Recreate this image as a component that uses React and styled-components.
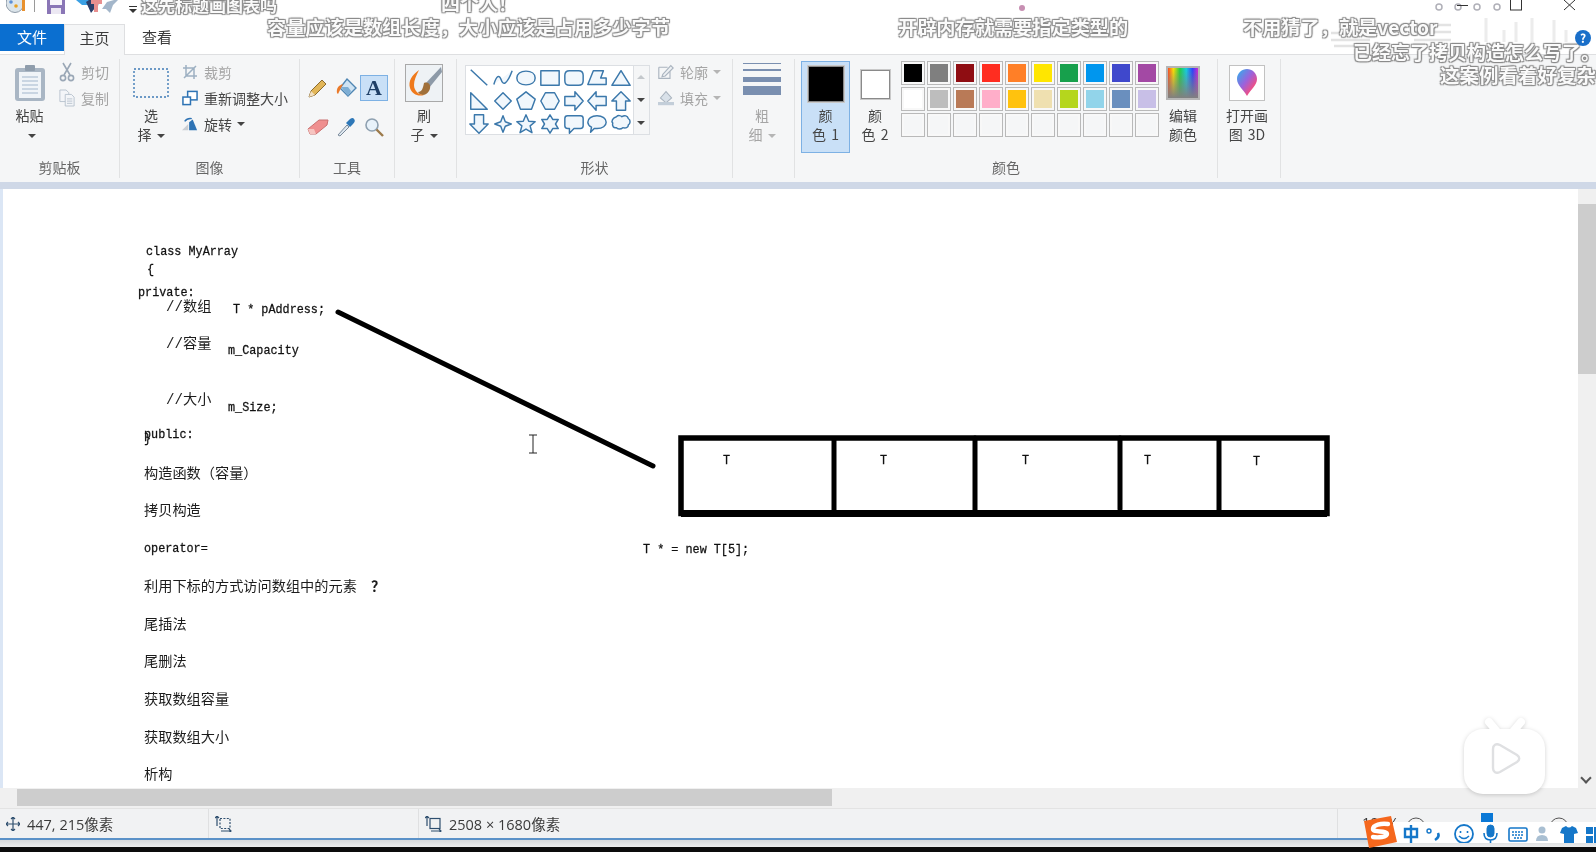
import React from "react";
import styled, { createGlobalStyle } from "styled-components";

const GlobalStyle = createGlobalStyle`
  html, body { margin: 0; padding: 0; background: #fff; }
  body { font-family: "Noto Sans CJK SC", "Noto Sans", sans-serif; overflow: hidden; }
`;

const row1 = ["#000000", "#7f7f7f", "#8f0d12", "#ff2d20", "#ff7f27", "#ffe600", "#17a04c", "#0096ee", "#3f48cc", "#a349a4"];
const row2 = ["#ffffff", "#bdbdbd", "#b97a57", "#ffaec9", "#ffc20e", "#efe0b0", "#b5d61d", "#92d4ea", "#6a8fbe", "#c8bfe7"];
const row3 = Array(10).fill("transparent");

const shapes = [
  "M3 3L21 20",
  "M2 19C5 9 8 8 10 14S16 20 22 4",
  "M12 4.5C18 4.5 22 7.5 22 12S18 19.5 12 19.5S2 16.5 2 12S6 4.5 12 4.5Z",
  "M2 4H22V20H2Z",
  "M7 4H17Q22 4 22 9V15Q22 20 17 20H7Q2 20 2 15V9Q2 4 7 4Z",
  "M2 19L8 4H19L16 12H22V19Z",
  "M12 4L22 20H2Z",
  "M3 3L21 21H3Z",
  "M12 3L21 12L12 21L3 12Z",
  "M12 2L22 10L18 21H6L2 10Z",
  "M7 3H17L22 12L17 21H7L2 12Z",
  "M2 7H13V2L22 12L13 22V17H2Z",
  "M22 7H11V2L2 12L11 22V17H22Z",
  "M12 2L22 12H17V22H7V12H2Z",
  "M12 22L22 12H17V2H7V12H2Z",
  "M12 3L14.5 9.5L21 12L14.5 14.5L12 21L9.5 14.5L3 12L9.5 9.5Z",
  "M12 2L15 9L22 9.5L16.5 14L18.5 21.5L12 17.5L5.5 21.5L7.5 14L2 9.5L9 9Z",
  "M12 2L15 7H21L18 12L21 17H15L12 22L9 17H3L6 12L3 7H9Z",
  "M5 3H19Q22 3 22 6V14Q22 17 19 17H12L7 22V17H5Q2 17 2 14V6Q2 3 5 3Z",
  "M12 3C18 3 22 6 22 10S18 17 12 17Q10 17 9 17L5 21L6 15.5C3.5 14 2 12 2 10C2 6 6 3 12 3Z",
  "M7 4C9 2 12 3 13 4C16 2 19 3 20 6C23 8 22 12 20 13C20 16 17 17 14 16C12 18 8 18 7 16C4 17 2 14 3 11C1 9 3 5 7 4Z",
];

const leftNotes = [
  { y: 474, text: "构造函数（容量）" },
  { y: 511, text: "拷贝构造" },
  { y: 587, text: "利用下标的方式访问数组中的元素" },
  { y: 625, text: "尾插法" },
  { y: 662, text: "尾删法" },
  { y: 700, text: "获取数组容量" },
  { y: 738, text: "获取数组大小" },
  { y: 775, text: "析构" },
];

const code = [
  { x: 146, y: 252, text: "class MyArray" },
  { x: 147, y: 270, text: "{" },
  { x: 138, y: 293, text: "private:" },
  { x: 233, y: 310, text: "T * pAddress;" },
  { x: 228, y: 351, text: "m_Capacity" },
  { x: 228, y: 408, text: "m_Size;" },
  { x: 144, y: 435, text: "public:" },
  { x: 144, y: 439, text: "}" },
  { x: 144, y: 549, text: "operator=" },
  { x: 643, y: 550, text: "T * = new T[5];" },
  { x: 723, y: 461, text: "T" },
  { x: 880, y: 461, text: "T" },
  { x: 1022, y: 461, text: "T" },
  { x: 1144, y: 461, text: "T" },
  { x: 1253, y: 462, text: "T" },
];

const comments = [
  { y: 309, text: "//数组" },
  { y: 346, text: "//容量" },
  { y: 402, text: "//大小" },
];

const danmaku = [
  { x: 141, y: 5, size: 17, text: "这先标题画图表吗" },
  { x: 441, y: 3, size: 19, text: "四个人！" },
  { x: 267, y: 27, size: 19.2, text: "容量应该是数组长度，大小应该是占用多少字节" },
  { x: 898, y: 27, size: 19.2, text: "开辟内存就需要指定类型的" },
  { x: 1243, y: 27, size: 19.2, text: "不用猜了，就是vector" },
  { x: 1353, y: 52, size: 19, text: "已经忘了拷贝构造怎么写了。" },
  { x: 1440, y: 75, size: 19.5, text: "这案例看着好复杂" },
];

function PasteIcon() {
  return (
    <svg width="32" height="38" viewBox="0 0 32 38">
      <rect x="1" y="4" width="30" height="33" rx="3" fill="#a9b6c4" />
      <rect x="5" y="8" width="22" height="26" fill="#f0f4f8" />
      <path d="M8 13H24M8 17H24M8 21H24M8 25H24M8 29H24" stroke="#bccada" strokeWidth="1.5" />
      <rect x="11" y="1" width="10" height="6" rx="1" fill="#8f9dac" />
    </svg>
  );
}

function CutIcon() {
  return (
    <svg width="16" height="20" viewBox="0 0 16 20" fill="none" stroke="#9aa7b6" strokeWidth="1.6">
      <path d="M4 1L11 13M12 1L5 13" />
      <circle cx="4" cy="16" r="2.6" />
      <circle cx="12" cy="16" r="2.6" />
    </svg>
  );
}

function CopyIcon() {
  return (
    <svg width="18" height="20" viewBox="0 0 18 20" fill="#f3f5f8" stroke="#b5c0cc">
      <path d="M1 1H8L11 4V14H1Z" />
      <path d="M7 6H14L17 9V19H7Z" />
      <path d="M9 11H15M9 13.5H15M9 16H15" />
    </svg>
  );
}

function SelectIcon() {
  return (
    <svg width="36" height="30" viewBox="0 0 36 30">
      <rect x="1" y="1" width="34" height="28" fill="none" stroke="#3f7bb6" strokeWidth="1.4" strokeDasharray="2 2" />
    </svg>
  );
}

function CropIcon() {
  return (
    <svg width="16" height="16" viewBox="0 0 16 16" fill="none" stroke="#9db0c2" strokeWidth="1.5">
      <path d="M4 1V12H15M1 4H12V15M2 14L14 2" />
    </svg>
  );
}

function ResizeIcon() {
  return (
    <svg width="17" height="16" viewBox="0 0 17 16" fill="#fff" stroke="#2e73b4" strokeWidth="1.6">
      <rect x="6" y="1" width="10" height="9" />
      <rect x="1" y="7" width="8" height="8" />
    </svg>
  );
}

function RotateIcon() {
  return (
    <svg width="18" height="16" viewBox="0 0 18 16">
      <path d="M0 15L7 15V8Z" fill="#c9ced4" />
      <path d="M8 15H17L12 3L8 6Z" fill="#2e73b4" />
      <path d="M3 5Q6 1 11 2" fill="none" stroke="#2e73b4" strokeWidth="1.6" />
    </svg>
  );
}

function PencilIcon() {
  return (
    <svg width="20" height="20" viewBox="0 0 20 20">
      <path d="M1 19L3 13L14 2L18 6L7 17Z" fill="#e2b658" stroke="#8a6b2f" />
      <path d="M1 19L3 13L7 17Z" fill="#f2dfc0" />
    </svg>
  );
}

function FillIcon() {
  return (
    <svg width="22" height="22" viewBox="0 0 22 22">
      <path d="M12 2L21 11L13 19L5 11Z" fill="#cfe3f3" stroke="#4f86b3" strokeWidth="1.4" />
      <path d="M6 10L13 10L16 14L13 19Z" fill="#7eaed4" />
      <path d="M2 16C1 11 4 8 8 7L6 11L3 17Z" fill="#ea7a2a" />
    </svg>
  );
}

function EraserIcon() {
  return (
    <svg width="22" height="18" viewBox="0 0 22 18">
      <path d="M1 11L12 2H21L20 7L9 16H3Z" fill="#ef8f8f" stroke="#c97070" />
      <path d="M1 11L3 16H9L7 11Z" fill="#f6c4c0" />
    </svg>
  );
}

function PickerIcon() {
  return (
    <svg width="20" height="20" viewBox="0 0 20 20">
      <path d="M2 18L11 8L13 10L4 19Z" fill="#dfe8f0" stroke="#7a8a9a" />
      <path d="M10 6L14 2Q17 0 18 2Q20 4 17 7L14 10Z" fill="#2e78b8" />
    </svg>
  );
}

function ZoomIcon() {
  return (
    <svg width="20" height="20" viewBox="0 0 20 20" fill="none">
      <circle cx="8" cy="8" r="6" fill="#e8f2fa" stroke="#8ea0b0" strokeWidth="1.6" />
      <path d="M12.5 12.5L19 19" stroke="#9c7a4a" strokeWidth="2.4" />
    </svg>
  );
}

function BrushIcon() {
  return (
    <svg width="38" height="38" viewBox="0 0 38 38">
      <rect x="0.5" y="0.5" width="37" height="37" fill="#eef2f5" stroke="#a9a9a9" />
      <path d="M36 3L20 20L24 24L37 8Z" fill="#8d9aa8" />
      <path d="M19 19C24 17 27 22 24 27C21 32 15 32 13 28C17 28 18 24 19 19Z" fill="#a0703a" />
      <path d="M14 6C7 11 3 17 5 24C7 30 13 33 19 31C14 31 9 27 9 21C9 16 11 12 14 6Z" fill="#ef7a1c" />
    </svg>
  );
}

function OutlineIcon() {
  return (
    <svg width="20" height="18" viewBox="0 0 20 18" fill="none" stroke="#aab4bf" strokeWidth="1.4">
      <path d="M1 3H12M1 3V17H15V8" />
      <path d="M6 12L16 1L19 4L9 14L5 15Z" fill="#eef1f4" />
    </svg>
  );
}

function FillShapeIcon() {
  return (
    <svg width="20" height="18" viewBox="0 0 20 18">
      <path d="M3 9L10 1L17 9L10 15Z" fill="#d9e1e9" stroke="#aab4bf" strokeWidth="1.3" />
      <rect x="0" y="14" width="20" height="4" fill="#c3ced9" />
    </svg>
  );
}

function LinesIcon() {
  return (
    <svg width="40" height="34" viewBox="0 0 40 34" fill="#7a8fb0">
      <rect x="1" y="0" width="38" height="1" />
      <rect x="1" y="6" width="38" height="2" />
      <rect x="1" y="14" width="38" height="5" />
      <rect x="1" y="23" width="38" height="9" />
    </svg>
  );
}

function RainbowIcon() {
  return (
    <svg width="34" height="34" viewBox="0 0 34 34">
      <defs>
        <linearGradient id="spectrum" x1="0" x2="1" y1="0" y2="0">
          <stop offset="0" stopColor="#ff2a2a" />
          <stop offset="0.2" stopColor="#ffe000" />
          <stop offset="0.4" stopColor="#20d040" />
          <stop offset="0.6" stopColor="#10d0e0" />
          <stop offset="0.8" stopColor="#2a40ff" />
          <stop offset="1" stopColor="#f020d0" />
        </linearGradient>
        <linearGradient id="fade" x1="0" x2="0" y1="0" y2="1">
          <stop offset="0" stopColor="#808080" stopOpacity="0" />
          <stop offset="1" stopColor="#808080" stopOpacity="1" />
        </linearGradient>
      </defs>
      <rect x="1" y="1" width="32" height="32" fill="url(#spectrum)" stroke="#b5b5b5" strokeWidth="2" />
      <rect x="2" y="2" width="30" height="30" fill="url(#fade)" />
    </svg>
  );
}

function Paint3DIcon() {
  return (
    <svg width="36" height="36" viewBox="0 0 36 36">
      <defs>
        <linearGradient id="drop" x1="0" x2="1" y1="0" y2="1">
          <stop offset="0" stopColor="#28b4ee" />
          <stop offset="0.45" stopColor="#9b62dc" />
          <stop offset="0.75" stopColor="#ef4f86" />
          <stop offset="1" stopColor="#ffb21e" />
        </linearGradient>
      </defs>
      <rect x="0.5" y="0.5" width="35" height="35" fill="#fff" stroke="#c2c2c2" />
      <path d="M18 31C14 24 8 20 8 14C8 8 13 4 18 4C23 4 28 8 28 14C28 20 22 24 18 31Z" fill="url(#drop)" />
    </svg>
  );
}

function PaletteSmall() {
  return (
    <svg width="20" height="14" viewBox="0 0 20 14">
      <ellipse cx="9" cy="3" rx="9" ry="9.500" fill="#dbe4ea" stroke="#8e9aa7" />
      <circle cx="5" cy="2" r="1.8" fill="#5b8fd6" />
      <circle cx="10" cy="6" r="1.8" fill="#e8a020" />
      <path d="M16 0H19V11H16Z" fill="#e8912f" />
    </svg>
  );
}

function SaveIcon() {
  return (
    <svg width="18" height="14" viewBox="0 0 18 14">
      <rect x="0" y="-4" width="18" height="18" fill="#8a76b6" />
      <rect x="4" y="8" width="10" height="6" fill="#ece8f3" />
      <rect x="3" y="-4" width="12" height="9" fill="#f7f5fa" />
    </svg>
  );
}

function UndoIcon() {
  return (
    <svg width="42" height="14" viewBox="0 0 42 14">
      <path d="M0 0H13V5H6Z" fill="#3aa0e4" />
      <path d="M10 2L15 13L19 8L21 12L23 0H13Z" fill="#2c3f6b" />
      <path d="M15 0H26V4H22V12H18V4H15Z" fill="#e88f8f" />
      <path d="M26 9L31 2L38 0H42L37 5L34 13L30 9Z" fill="#a3b6ca" />
    </svg>
  );
}

function WindowIcons() {
  return (
    <svg width="166" height="24" viewBox="0 0 166 24" fill="none">
      <g stroke="#b0b0b8" strokeWidth="1.5">
        <circle cx="9" cy="7" r="3" />
        <circle cx="28" cy="7" r="3" />
        <circle cx="47" cy="7" r="3" />
        <circle cx="67" cy="7" r="3" />
      </g>
      <path d="M27 5.5H38" stroke="#333" />
      <rect x="80.5" y="-2" width="11" height="12" stroke="#333" />
      <path d="M134 0L145 10M145 0L134 10" stroke="#333" />
    </svg>
  );
}

function GhostMarks() {
  return (
    <svg width="270" height="32" viewBox="0 0 270 32" fill="none" stroke="#e3e3e3" strokeWidth="2.5">
      <path d="M5 17H44M5 24H44M8 30H44M88 9H125M88 16H125M88 24H125" />
      <path d="M160 2V26M178 14V26M190 6V26M206 2V26M228 4V26M240 14V26" stroke="#ececec" strokeWidth="3" />
    </svg>
  );
}

function IBeam() {
  return (
    <svg width="10" height="20" viewBox="0 0 10 20" fill="none" stroke="#222">
      <path d="M1 1H9M5 1V19M1 19H9" />
    </svg>
  );
}

function Diagram() {
  return (
    <svg width="1578" height="599" viewBox="0 189 1578 599" fill="none" stroke="#000">
      <path d="M338 312L653 466" strokeWidth="5" strokeLinecap="round" />
      <path d="M681 438H1327V513.5H681Z" strokeWidth="5.5" />
      <path d="M681 513.5H1327" strokeWidth="7" />
      <path d="M834 438V513M1219 438V513" strokeWidth="5" />
      <path d="M975 438V510M1120 438V509" strokeWidth="5" strokeLinecap="round" />
    </svg>
  );
}

function MoveIcon() {
  return (
    <svg width="14" height="14" viewBox="0 0 14 14" fill="none" stroke="#2f4f6f" strokeWidth="1.2">
      <path d="M7 0V14M0 7H14M5 2L7 0L9 2M5 12L7 14L9 12M2 5L0 7L2 9M12 5L14 7L12 9" />
    </svg>
  );
}

function SelectionSize() {
  return (
    <svg width="17" height="16" viewBox="0 0 17 16" fill="none" stroke="#2f4f6f" strokeWidth="1.2">
      <rect x="5" y="2.5" width="10" height="10" strokeDasharray="2 1.4" />
      <path d="M2 0V10M0 2L2 0L4 2M6 15H16M14 13L16 15L14 17" />
    </svg>
  );
}

function CanvasSize() {
  return (
    <svg width="17" height="16" viewBox="0 0 17 16" fill="none" stroke="#2f4f6f" strokeWidth="1.2">
      <rect x="5" y="2.5" width="10" height="10" />
      <path d="M2 0V10M0 2L2 0L4 2M6 15H16M14 13L16 15L14 17" />
    </svg>
  );
}

function ZoomControls() {
  return (
    <svg width="190" height="20" viewBox="0 0 190 20" fill="none" stroke="#555">
      <path d="M0 13H180" stroke="#bbb" strokeWidth="2" />
      <circle cx="9" cy="14" r="9" fill="#f2f2f2" />
      <rect x="74" y="0" width="12" height="16" fill="#0a78d6" stroke="none" />
      <circle cx="152" cy="14" r="9" fill="#f2f2f2" />
    </svg>
  );
}

function SogouLogo() {
  return (
    <svg width="34" height="32" viewBox="0 0 34 32">
      <path d="M1 5L28 0L34 26L6 32Z" fill="#f5671d" />
      <path d="M25 8C18 7 10 9 10 13C10 17 24 14 24 18C24 21 15 22 10 21" fill="none" stroke="#fff" strokeWidth="4.4" strokeLinecap="round" />
    </svg>
  );
}

function ImeIcons() {
  return (
    <svg width="194" height="21" viewBox="0 0 194 21" fill="none" stroke="#1577c9">
      <path d="M3 5H15V13H3ZM9 1V20" strokeWidth="2.4" />
      <circle cx="27" cy="7" r="2" strokeWidth="1.4" />
      <path d="M36 9Q38 13 33 16" strokeWidth="2.6" />
      <circle cx="62" cy="10" r="9" strokeWidth="1.8" />
      <path d="M57 12Q62 17 67 12M58.5 7V9M65.5 7V9" strokeWidth="1.6" />
      <rect x="85" y="1" width="7" height="12" rx="3.5" fill="#1577c9" />
      <path d="M82 9Q82 16 88.500 16Q95 16 95 9M88.500 16V20M84 20H93" strokeWidth="1.6" />
      <rect x="107" y="4" width="18" height="13" rx="1.500" strokeWidth="1.6" />
      <path d="M110 8H122M110 11H122M112 14H120" strokeWidth="1.4" strokeDasharray="2 1" />
      <circle cx="140" cy="6" r="3.500" fill="#a9bfd2" stroke="none" />
      <path d="M134 17Q134 11 140 11Q146 11 146 17Z" fill="#a9bfd2" stroke="none" />
      <path d="M160 4L164 2Q167 5 170 2L174 4L176 9L172 10V19H162V10L158 9Z" fill="#1577c9" stroke="none" />
      <path d="M184 3H191V10H184ZM184 12H191V19H184ZM192 3H194V19H192Z" fill="#1577c9" stroke="none" />
    </svg>
  );
}

function BiliLogo() {
  return (
    <svg width="84" height="80" viewBox="0 0 84 80">
      <path d="M26 6L36 18M58 6L48 18" stroke="#fff" strokeWidth="8" strokeLinecap="round" />
      <rect x="1" y="13" width="81" height="65" rx="19" fill="#fff" />
      <path d="M30 33C30 29 33 27 37 29L54 39C57 41 57 44 54 46L37 56C33 58 30 56 30 52Z" fill="#fff" stroke="#dfe0e2" strokeWidth="2.4" />
    </svg>
  );
}

export default function App() {
  return (
    <>
      <GlobalStyle />
      <Root>
        <TitleBar>
          <TitleSlot $ml={6}><PaletteSmall /></TitleSlot>
          <TitleSep />
          <TitleSlot $ml={12}><SaveIcon /></TitleSlot>
          <TitleSlot $ml={11}><UndoIcon /></TitleSlot>
          <TitleSlot $ml={11}><QuickCaret /></TitleSlot>
          <WindowSlot><WindowIcons /></WindowSlot>
        </TitleBar>

        <TabRow>
          <FileTab>文件</FileTab>
          <HomeTab>主页</HomeTab>
          <ViewTab>查看</ViewTab>
        </TabRow>

        <Ribbon>
          <Group $w={120}>
            <GroupBody>
              <LargeButton $w={59}>
                <IconSlot><PasteIcon /></IconSlot>
                <LargeLabel>粘贴</LargeLabel>
                <LargeLabel><Caret /></LargeLabel>
              </LargeButton>
              <SmallColumn>
                <SmallItem $muted><SmallIcon><CutIcon /></SmallIcon>剪切</SmallItem>
                <SmallItem $muted><SmallIcon><CopyIcon /></SmallIcon>复制</SmallItem>
              </SmallColumn>
            </GroupBody>
            <GroupLabel>剪贴板</GroupLabel>
          </Group>

          <Group $w={180}>
            <GroupBody>
              <LargeButton $w={62}>
                <IconSlot><SelectIcon /></IconSlot>
                <LargeLabel>选</LargeLabel>
                <LargeLabel>择<Caret /></LargeLabel>
              </LargeButton>
              <SmallColumn>
                <SmallItem $muted><SmallIcon><CropIcon /></SmallIcon>裁剪</SmallItem>
                <SmallItem><SmallIcon><ResizeIcon /></SmallIcon>重新调整大小</SmallItem>
                <SmallItem><SmallIcon><RotateIcon /></SmallIcon>旋转<Caret /></SmallItem>
              </SmallColumn>
            </GroupBody>
            <GroupLabel>图像</GroupLabel>
          </Group>

          <Group $w={95}>
            <GroupBody>
              <ToolGrid>
                <ToolCell><PencilIcon /></ToolCell>
                <ToolCell><FillIcon /></ToolCell>
                <ToolCell $active><TextTool>A</TextTool></ToolCell>
                <ToolCell><EraserIcon /></ToolCell>
                <ToolCell><PickerIcon /></ToolCell>
                <ToolCell><ZoomIcon /></ToolCell>
              </ToolGrid>
            </GroupBody>
            <GroupLabel>工具</GroupLabel>
          </Group>

          <Group $w={62}>
            <GroupBody>
              <LargeButton $w={58}>
                <IconSlot><BrushIcon /></IconSlot>
                <LargeLabel>刷</LargeLabel>
                <LargeLabel>子<Caret /></LargeLabel>
              </LargeButton>
            </GroupBody>
            <GroupLabel />
          </Group>

          <Group $w={276}>
            <GroupBody>
              <Gallery>
                <ShapeGrid>
                  {shapes.map((d) => (
                    <svg key={d} width="22" height="22" viewBox="0 0 24 24" fill="#f1f7fc" stroke="#3b78ab" strokeWidth="1.6" strokeLinejoin="round">
                      <path d={d} />
                    </svg>
                  ))}
                </ShapeGrid>
                <GalleryScroll>
                  <ScrollArrow $dir="up" />
                  <ScrollArrow $dir="down" />
                  <ScrollArrow $dir="more" />
                </GalleryScroll>
              </Gallery>
              <ShapeOptions>
                <SmallItem $muted><SmallIcon><OutlineIcon /></SmallIcon>轮廓<Caret $muted /></SmallItem>
                <SmallItem $muted><SmallIcon><FillShapeIcon /></SmallIcon>填充<Caret $muted /></SmallItem>
              </ShapeOptions>
            </GroupBody>
            <GroupLabel>形状</GroupLabel>
          </Group>

          <Group $w={62}>
            <GroupBody>
              <LargeButton $w={58} $muted>
                <IconSlot $h={42} $pad={6}><LinesIcon /></IconSlot>
                <LargeLabel>粗</LargeLabel>
                <LargeLabel>细<Caret $muted /></LargeLabel>
              </LargeButton>
            </GroupBody>
            <GroupLabel />
          </Group>

          <Group $w={423}>
            <GroupBody>
              <ColorPick $selected>
                <IconSlot $h={46}><ColorSwatch $size={36} $fill="#000" /></IconSlot>
                <LargeLabel>颜</LargeLabel>
                <LargeLabel $wide>色 1</LargeLabel>
              </ColorPick>
              <ColorPick>
                <IconSlot $h={46}><ColorSwatch $size={29} $fill="#fff" /></IconSlot>
                <LargeLabel>颜</LargeLabel>
                <LargeLabel $wide>色 2</LargeLabel>
              </ColorPick>
              <Palette>
                {[...row1, ...row2, ...row3].map((c, i) => (
                  <PaletteCell key={i} $fill={c} />
                ))}
              </Palette>
              <LargeButton $w={48}>
                <IconSlot><RainbowIcon /></IconSlot>
                <LargeLabel>编辑</LargeLabel>
                <LargeLabel>颜色</LargeLabel>
              </LargeButton>
            </GroupBody>
            <GroupLabel>颜色</GroupLabel>
          </Group>

          <Group $w={63}>
            <GroupBody>
              <LargeButton $w={58}>
                <IconSlot><Paint3DIcon /></IconSlot>
                <LargeLabel>打开画</LargeLabel>
                <LargeLabel $wide>图 3D</LargeLabel>
              </LargeButton>
            </GroupBody>
            <GroupLabel />
          </Group>
        </Ribbon>

        <RibbonEdge />

        <Workspace>
          <Canvas>
            <Diagram />
            {code.map((c) => (
              <CodeText key={c.text + c.x + c.y} $x={c.x} $y={c.y}>{c.text}</CodeText>
            ))}
            {comments.map((c) => (
              <NoteText key={c.text} $x={166} $y={c.y} $comment>{c.text}</NoteText>
            ))}
            {leftNotes.map((n) => (
              <NoteText key={n.text} $x={144} $y={n.y}>{n.text}</NoteText>
            ))}
            <NoteText $x={371} $y={587} $strong>？</NoteText>
            <Cursor><IBeam /></Cursor>
          </Canvas>
          <VScroll>
            <VThumb />
            <VArrowDown />
          </VScroll>
        </Workspace>

        <HScroll>
          <HThumb />
        </HScroll>

        <StatusBar>
          <StatusCell $w={209}><MoveIcon />447, 215像素</StatusCell>
          <StatusCell $w={210}><SelectionSize /></StatusCell>
          <StatusCell $w={919}><CanvasSize />2508 × 1680像素</StatusCell>
          <ZoomValue>100%</ZoomValue>
        </StatusBar>
        <BlueLine />
        <BlackStrip />

        <Ghost><GhostMarks /></Ghost>
        {danmaku.map((d) => (
          <Danmaku key={d.text} $x={d.x} $y={d.y} $size={d.size}>{d.text}</Danmaku>
        ))}
        <PinkDot />
        <HelpBadge>?</HelpBadge>
        <Bili><BiliLogo /></Bili>
        <ZoomSlot><ZoomControls /></ZoomSlot>
        <ImeBar><ImeIcons /></ImeBar>
        <Sogou><SogouLogo /></Sogou>
      </Root>
    </>
  );
}

const Root = styled.div`
  position: relative;
  width: 1596px;
  height: 852px;
  overflow: hidden;
  display: flex;
  flex-direction: column;
  background: #fff;
  filter: blur(0.35px);
`;

const TitleBar = styled.div`
  height: 24px;
  display: flex;
  align-items: flex-start;
  background: #fff;
`;

const TitleSlot = styled.div`
  margin-left: ${(p) => p.$ml}px;
  line-height: 0;
`;

const TitleSep = styled.div`
  width: 1px;
  height: 12px;
  margin-left: 8px;
  background: #9a9a9a;
`;

const QuickCaret = styled.div`
  margin-top: 6px;
  width: 8px;
  height: 8px;
  border-top: 1.5px solid #333;
  &::after {
    content: "";
    display: block;
    margin: 2px 0 0;
    border: 4px solid transparent;
    border-top-color: #333;
    border-bottom: 0;
  }
`;

const WindowSlot = styled.div`
  margin-left: auto;
  line-height: 0;
`;

const TabRow = styled.div`
  height: 30px;
  display: flex;
  align-items: flex-start;
  font-size: 15px;
  color: #3b3b3b;
  background: #fff;
  border-bottom: 1px solid #dedfe1;
`;

const FileTab = styled.div`
  width: 64px;
  height: 27px;
  line-height: 25px;
  text-align: center;
  background: #0b6fd0;
  color: #fff;
`;

const HomeTab = styled.div`
  width: 61px;
  height: 31px;
  line-height: 26px;
  text-align: center;
  box-sizing: border-box;
  background: #f5f6f7;
  border: 1px solid #dedfe1;
  border-bottom: 0;
  margin-bottom: -1px;
`;

const ViewTab = styled.div`
  width: 64px;
  height: 30px;
  line-height: 26px;
  text-align: center;
`;

const Ribbon = styled.div`
  height: 127px;
  box-sizing: border-box;
  display: flex;
  padding: 4px 0 4px;
  background: #f5f6f7;
  font-size: 14px;
  color: #454545;
`;

const Group = styled.div`
  width: ${(p) => p.$w}px;
  box-sizing: border-box;
  display: flex;
  flex-direction: column;
  border-right: 1px solid #e1e2e3;
`;

const GroupBody = styled.div`
  flex: 1;
  display: flex;
  align-items: flex-start;
`;

const GroupLabel = styled.div`
  height: 18px;
  line-height: 14px;
  text-align: center;
  color: #666;
  font-size: 14px;
`;

const LargeButton = styled.div`
  width: ${(p) => p.$w}px;
  flex-shrink: 0;
  display: flex;
  flex-direction: column;
  align-items: center;
  color: ${(p) => (p.$muted ? "#a5a5a5" : "inherit")};
`;

const IconSlot = styled.div`
  height: ${(p) => p.$h || 48}px;
  padding-bottom: ${(p) => p.$pad || 0}px;
  display: flex;
  align-items: center;
  justify-content: center;
`;

const LargeLabel = styled.div`
  height: 19px;
  line-height: 17px;
  white-space: nowrap;
  word-spacing: ${(p) => (p.$wide ? 2 : 0)}px;
`;

const Caret = styled.span`
  display: inline-block;
  margin-left: 5px;
  vertical-align: middle;
  border: 4px solid transparent;
  border-top-color: ${(p) => (p.$muted ? "#b5b5b5" : "#444")};
  border-bottom: 0;
`;

const SmallColumn = styled.div`
  display: flex;
  flex-direction: column;
`;

const SmallItem = styled.div`
  height: 26px;
  display: flex;
  align-items: center;
  white-space: nowrap;
  color: ${(p) => (p.$muted ? "#a5a5a5" : "inherit")};
`;

const SmallIcon = styled.span`
  width: 16px;
  margin-right: 6px;
  display: flex;
  justify-content: center;
`;

const ToolGrid = styled.div`
  display: grid;
  grid-template-columns: repeat(3, 28px);
  grid-auto-rows: 26px;
  row-gap: 13px;
  padding: 16px 0 0 4px;
`;

const ToolCell = styled.div`
  display: flex;
  align-items: center;
  justify-content: center;
  box-sizing: border-box;
  background: ${(p) => (p.$active ? "#c9e0f7" : "transparent")};
  border: 1px solid ${(p) => (p.$active ? "#7db1e4" : "transparent")};
`;

const TextTool = styled.span`
  font-family: "Liberation Serif", serif;
  font-weight: 700;
  font-size: 22px;
  color: #1f3f66;
`;

const Gallery = styled.div`
  width: 185px;
  height: 70px;
  margin: 6px 0 0 8px;
  box-sizing: border-box;
  display: flex;
  border: 1px solid #dcdfe3;
  background: #fff;
`;

const ShapeGrid = styled.div`
  flex: 1;
  display: grid;
  grid-template-columns: repeat(7, 23.7px);
  grid-auto-rows: 23px;
  place-items: center;
  padding-left: 1px;
`;

const GalleryScroll = styled.div`
  width: 16px;
  display: flex;
  flex-direction: column;
  background: #f5f6f7;
  border-left: 1px solid #dcdfe3;
`;

const ScrollArrow = styled.div`
  flex: 1;
  display: flex;
  flex-direction: column;
  align-items: center;
  justify-content: center;
  &::before {
    content: "";
    border: 4px solid transparent;
    ${(p) => p.$dir === "up" && "border-bottom-color: #c4c8cc; border-top: 0;"}
    ${(p) => p.$dir !== "up" && "border-top-color: #444; border-bottom: 0;"}
    ${(p) => p.$dir === "more" && "box-shadow: 0 -3px 0 -2px #444;"}
  }
`;

const ShapeOptions = styled(SmallColumn)`
  margin-left: 8px;
`;

const ColorPick = styled.div`
  width: ${(p) => (p.$selected ? 49 : 50)}px;
  height: 92px;
  flex-shrink: 0;
  margin: 2px 0 0 ${(p) => (p.$selected ? 6 : 0)}px;
  display: flex;
  flex-direction: column;
  align-items: center;
  background: ${(p) => (p.$selected ? "#c9e0f7" : "transparent")};
  box-shadow: ${(p) => (p.$selected ? "inset 0 0 0 1px #7db1e4" : "none")};
`;

const ColorSwatch = styled.div`
  width: ${(p) => p.$size}px;
  height: ${(p) => p.$size}px;
  background: ${(p) => p.$fill};
  border: 1px solid #8a8a8a;
  outline: 1px solid #c9c9c9;
  box-sizing: border-box;
`;

const Palette = styled.div`
  margin: 2px 0 0 1px;
  display: grid;
  grid-template-columns: repeat(10, 24px);
  grid-auto-rows: 24px;
  gap: 2px;
`;

const PaletteCell = styled.div`
  box-sizing: border-box;
  border: 1px solid #b9b9b9;
  background: ${(p) => p.$fill};
  box-shadow: inset 0 0 0 2px #f8f8f8;
`;

const RibbonEdge = styled.div`
  height: 7px;
  background: #cfd8e7;
`;

const Workspace = styled.div`
  height: 599px;
  display: flex;
`;

const Canvas = styled.div`
  position: relative;
  flex: 1;
  overflow: hidden;
  background: #fff;
  border-left: 3px solid #dbe6f5;
  svg { display: block; margin-left: -3px; }
`;

const CodeText = styled.span`
  position: absolute;
  left: ${(p) => p.$x - 3}px;
  top: ${(p) => p.$y - 189 - 9}px;
  line-height: 18px;
  font-family: "Liberation Mono", "DejaVu Sans Mono", monospace;
  font-size: 11.8px;
  color: #111;
  white-space: pre;
  -webkit-text-stroke: 0.25px #111;
  transform: scaleY(1.12);
`;

const NoteText = styled.span`
  position: absolute;
  left: ${(p) => p.$x - 3}px;
  top: ${(p) => p.$y - 189 - 12}px;
  line-height: 20px;
  font-family: ${(p) => (p.$comment ? '"Liberation Mono", ' : "")}"Noto Sans CJK SC", sans-serif;
  font-size: 14.2px;
  font-weight: ${(p) => (p.$strong ? 700 : 400)};
  color: #1c1c1c;
  white-space: pre;
`;

const Cursor = styled.div`
  position: absolute;
  left: 525px;
  top: 245px;
  svg { margin: 0; }
`;

const VScroll = styled.div`
  position: relative;
  width: 18px;
  background: #f0f0f0;
  padding-top: 15px;
`;

const VThumb = styled.div`
  height: 170px;
  background: #cdcdcd;
`;

const VArrowDown = styled.div`
  position: absolute;
  left: 4px;
  bottom: 6px;
  width: 6px;
  height: 6px;
  border-right: 2px solid #555;
  border-bottom: 2px solid #555;
  transform: rotate(45deg);
`;

const HScroll = styled.div`
  height: 20px;
  background: #f0f0f0;
  padding: 1px 0 0 17px;
  box-sizing: border-box;
`;

const HThumb = styled.div`
  width: 815px;
  height: 17px;
  background: #cdcdcd;
`;

const StatusBar = styled.div`
  height: 30px;
  display: flex;
  background: #f1f2f3;
  border-top: 1px solid #e3e3e3;
  box-sizing: border-box;
  font-family: "Open Sans", "Noto Sans CJK SC", sans-serif;
  font-size: 14.5px;
  color: #3a3a3a;
`;

const StatusCell = styled.div`
  width: ${(p) => p.$w}px;
  box-sizing: border-box;
  display: flex;
  align-items: center;
  gap: 7px;
  padding-left: 6px;
  border-right: 1px solid #dfe0e1;
`;

const ZoomValue = styled.div`
  padding-left: 24px;
  line-height: 28px;
`;

const BlueLine = styled.div`
  height: 9px;
  border-top: 2px solid #5b92c8;
  background: linear-gradient(#d5d8db, #eceded);
  box-sizing: border-box;
`;

const BlackStrip = styled.div`
  flex: 1;
  background: #0c0c0c;
`;

const Ghost = styled.div`
  position: absolute;
  left: 1326px;
  top: 16px;
  line-height: 0;
`;

const Danmaku = styled.div`
  position: absolute;
  left: ${(p) => p.$x}px;
  top: ${(p) => p.$y - 14}px;
  line-height: 28px;
  font-size: ${(p) => p.$size}px;
  font-weight: 700;
  color: #fafafa;
  white-space: nowrap;
  text-shadow: 1px 1px 1px #8a8a8a, -1px -1px 1px #8a8a8a, 1px -1px 1px #8a8a8a, -1px 1px 1px #8a8a8a;
`;

const PinkDot = styled.div`
  position: absolute;
  left: 1019px;
  top: 5px;
  width: 6px;
  height: 6px;
  border-radius: 50%;
  background: #c78fb2;
`;

const HelpBadge = styled.div`
  position: absolute;
  left: 1575px;
  top: 30px;
  width: 16px;
  height: 16px;
  border-radius: 50%;
  background: #1a6fc9;
  color: #fff;
  font-size: 12px;
  font-weight: 700;
  line-height: 16px;
  text-align: center;
`;

const Bili = styled.div`
  position: absolute;
  left: 1463px;
  top: 716px;
  line-height: 0;
  filter: drop-shadow(0 1px 2px rgba(0, 0, 0, 0.18));
`;

const ZoomSlot = styled.div`
  position: absolute;
  left: 1407px;
  top: 813px;
  line-height: 0;
`;

const ImeBar = styled.div`
  position: absolute;
  left: 1393px;
  top: 822px;
  right: 0;
  height: 21px;
  padding: 2px 0 0 9px;
  box-sizing: border-box;
  background: #fff;
  line-height: 0;
  overflow: hidden;
`;

const Sogou = styled.div`
  position: absolute;
  left: 1363px;
  top: 816px;
  line-height: 0;
`;
